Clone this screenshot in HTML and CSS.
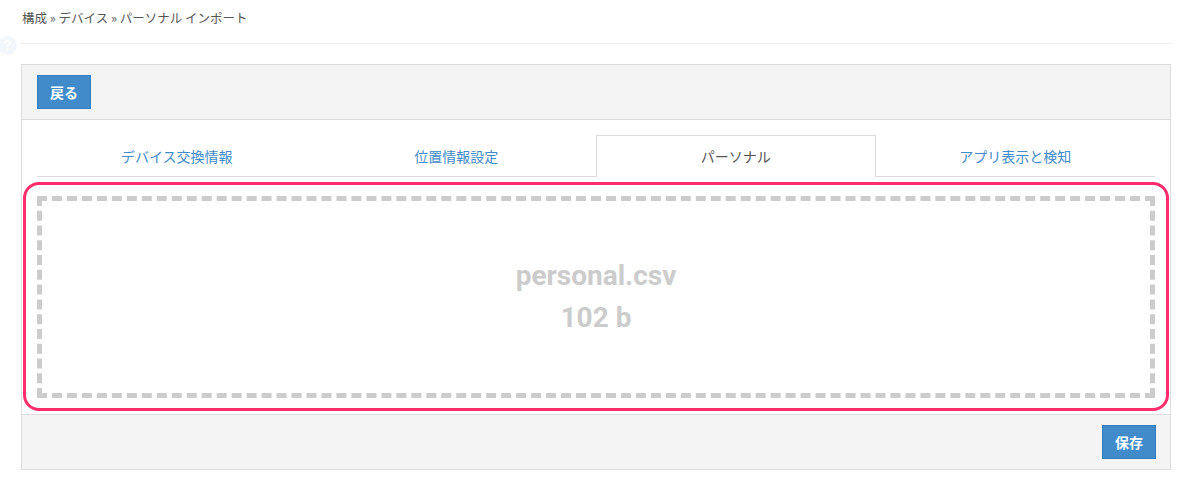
FILE: index.html
```html
<!DOCTYPE html>
<html lang="ja">
<head>
<meta charset="utf-8">
<link rel="stylesheet" href="styles.css">
</head>
<body>
<span class="help-icon">?</span>
<div class="page">
  <div class="breadcrumb">構成 » デバイス » パーソナル インポート</div>
  <div class="rule"></div>
  <div class="panel">
    <div class="panel-head">
      <button class="btn">戻る</button>
    </div>
    <div class="panel-body">
      <ul class="tabs">
        <li class="tab"><a>デバイス交換情報</a></li>
        <li class="tab"><a>位置情報設定</a></li>
        <li class="tab active"><a>パーソナル</a></li>
        <li class="tab"><a>アプリ表示と検知</a></li>
      </ul>
      <div class="focus-ring">
        <div class="dropzone">
          <div class="file-name">personal.csv</div>
          <div class="file-size">102 b</div>
        </div>
      </div>
    </div>
    <div class="panel-foot">
      <button class="btn">保存</button>
    </div>
  </div>
</div>
</body>
</html>
```
FILE: styles.css
```css
html, body {
  margin: 0;
  padding: 0;
  background: #fff;
}
body {
  position: relative;
  font-family: "Noto Sans CJK JP", "Liberation Sans", sans-serif;
  color: #555;
  width: 1186px;
  height: 486px;
  overflow: hidden;
}
.help-icon {
  position: absolute;
  left: -2px;
  top: 36px;
  width: 19px;
  height: 19px;
  border-radius: 50%;
  background: #f2f7fc;
  color: #fff;
  font: bold 14px/19px "Liberation Sans", sans-serif;
  text-align: center;
}
.page {
  padding: 0 15px 0 21px;
}
.breadcrumb {
  font-size: 12.5px;
  line-height: 18px;
  padding-top: 9px;
  padding-left: 1px;
  color: #555;
}
.rule {
  margin-top: 16px;
  height: 1px;
  background: #eee;
}
.panel {
  margin-top: 20px;
  border: 1px solid #ddd;
}
.panel-head {
  background: #f4f4f4;
  border-bottom: 1px solid #ddd;
  padding: 10px 15px;
  display: flex;
}
.panel-foot {
  background: #f4f4f4;
  border-top: 1px solid #ddd;
  padding: 10px 14px;
  display: flex;
  justify-content: flex-end;
}
.btn {
  height: 34px;
  width: 54px;
  padding: 0;
  background: #428bca;
  border: 1px solid #357ebd;
  border-radius: 0;
  color: #fff;
  font-family: "Noto Sans CJK JP", sans-serif;
  font-weight: bold;
  font-size: 14px;
  line-height: 32px;
}
.panel-body {
  padding: 15px 15px 3px;
}
.tabs {
  list-style: none;
  margin: 0;
  padding: 0;
  display: flex;
  border-bottom: 1px solid #ddd;
  height: 41px;
}
.tab {
  flex: 1 1 0;
  text-align: center;
  font-size: 14px;
  line-height: 40px;
  color: #428bca;
  margin-bottom: -1px;
  border: 1px solid transparent;
  border-bottom: 0;
}
.tab a {
  display: block;
}
.tab.active {
  color: #555;
  background: #fff;
  border-color: #ddd;
  height: 41px;
}
.focus-ring {
  margin: 5px -14px 0;
  border: 3px solid #ff2d6b;
  border-radius: 16px;
  padding: 11px 11px 10px;
}
.dropzone {
  border: 5px dashed #ccc;
  height: 192px;
  display: flex;
  flex-direction: column;
  justify-content: center;
  align-items: center;
  font-family: Roboto, "Liberation Sans", sans-serif;
  font-weight: bold;
  font-size: 28px;
  line-height: 42px;
  color: #ccc;
}
```
